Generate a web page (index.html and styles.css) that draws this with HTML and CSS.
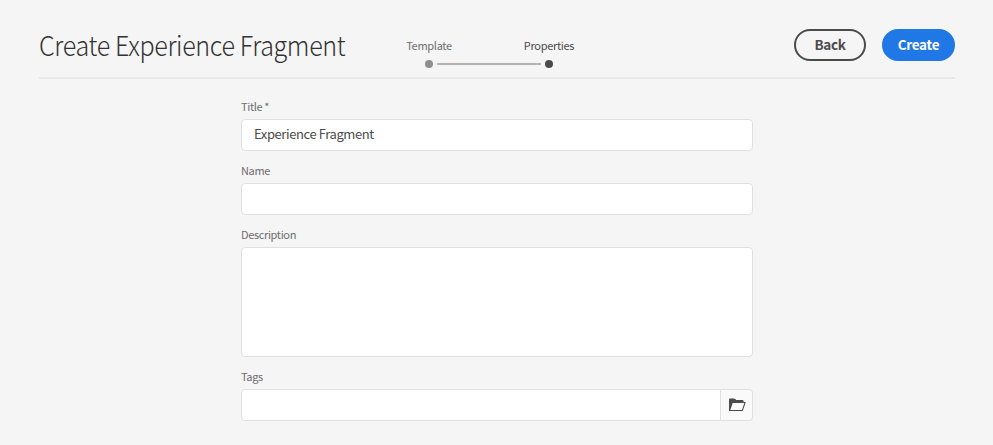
FILE: index.html
```html
<!DOCTYPE html>
<html lang="en">
<head>
<meta charset="utf-8">
<title>Create Experience Fragment</title>
<link rel="stylesheet" href="styles.css">
</head>
<body>
<header class="header">
  <h1 class="title">Create Experience Fragment</h1>
  <ol class="steps">
    <li class="step"><span class="step-label">Template</span><span class="dot"></span></li>
    <li class="step active"><span class="step-label">Properties</span><span class="dot"></span></li>
  </ol>
  <div class="actions">
    <button class="button secondary">Back</button>
    <button class="button primary">Create</button>
  </div>
</header>
<form class="form">
  <div class="field">
    <label class="label" for="title">Title *</label>
    <input class="input" id="title" type="text" value="Experience Fragment">
  </div>
  <div class="field">
    <label class="label" for="name">Name</label>
    <input class="input" id="name" type="text">
  </div>
  <div class="field">
    <label class="label" for="description">Description</label>
    <textarea class="input area" id="description"></textarea>
  </div>
  <div class="field">
    <label class="label" for="tags">Tags</label>
    <div class="group">
      <input class="input" id="tags" type="text">
      <button class="browse" type="button" aria-label="Browse">
        <svg width="18" height="14" viewBox="0 0 18 14">
          <path fill="#4b4b4b" fill-rule="evenodd" d="M1 13V1.500Q1 .5 2 .5H6Q6.700 .5 7.200 1L8.200 2H14.500Q15.500 2 15.500 3V4H17Q17.800 4 17.500 5L15 12.300Q14.800 13 14 13ZM4.700 5L2.300 12H14L16.300 5Z"/>
        </svg>
      </button>
    </div>
  </div>
</form>
</body>
</html>
```
FILE: styles.css
```css
* {
  box-sizing: border-box;
}

body {
  margin: 0;
  height: 445px;
  overflow: hidden;
  background: #f5f5f5;
  color: #4b4b4b;
  font-family: "Noto Sans CJK SC", "Noto Sans", sans-serif;
}

.header {
  display: flex;
  align-items: flex-start;
  width: 916px;
  height: 79px;
  margin-left: 39px;
  border-bottom: 2px solid #e8e8e8;
}

.title {
  width: 330px;
  margin: 27px 0 0;
  color: #323232;
  font-size: 27px;
  font-weight: 300;
  line-height: 36px;
  letter-spacing: -0.4px;
  white-space: nowrap;
  transform: scaleX(0.93);
  transform-origin: 0 0;
}

.steps {
  display: flex;
  margin: 37px 0 0;
  padding: 0;
  list-style: none;
}

.step {
  position: relative;
  display: flex;
  flex-direction: column;
  align-items: center;
  width: 120px;
  color: #6e6e6e;
  font-size: 11px;
  line-height: 16px;
  letter-spacing: -0.3px;
}

.step-label {
  white-space: nowrap;
}

.dot {
  width: 8px;
  height: 8px;
  margin-top: 7px;
  border-radius: 50%;
  background: #8e8e8e;
}

.step:first-child::after {
  content: "";
  position: absolute;
  top: 26px;
  left: 68px;
  width: 104px;
  height: 2px;
  background: #b3b3b3;
}

.active {
  color: #4b4b4b;
}

.active .dot {
  background: #4b4b4b;
}

.actions {
  display: flex;
  gap: 16px;
  margin: 29px 0 0 auto;
}

.button {
  height: 32px;
  padding: 0 0 1px;
  border: 2px solid #4b4b4b;
  border-radius: 16px;
  font: 700 13.5px/27px "Noto Sans CJK SC", "Noto Sans", sans-serif;
  letter-spacing: -0.3px;
}

.secondary {
  width: 72px;
  background: transparent;
  color: #4b4b4b;
}

.primary {
  width: 73px;
  border-color: #1f78e6;
  background: #1f78e6;
  color: #fff;
}

.form {
  display: flex;
  flex-direction: column;
  gap: 12px;
  width: 512px;
  margin: 20px 0 0 241px;
}

.field {
  display: flex;
  flex-direction: column;
}

.label {
  height: 20px;
  color: #6e6e6e;
  font-size: 11px;
  line-height: 14px;
  letter-spacing: -0.35px;
}

.input {
  display: block;
  width: 100%;
  height: 32px;
  padding: 0 12px 3px;
  border: 1px solid #e0e0e0;
  border-radius: 4px;
  outline: 0;
  background: #fff;
  color: #4b4b4b;
  font: 400 13px/20px "Noto Sans CJK SC", "Noto Sans", sans-serif;
  letter-spacing: -0.4px;
}

.area {
  height: 110px;
  resize: none;
}

.group {
  display: flex;
}

.group .input {
  width: 480px;
  border-radius: 4px 0 0 4px;
}

.browse {
  display: flex;
  align-items: center;
  justify-content: center;
  width: 32px;
  height: 32px;
  padding: 0;
  border: 1px solid #e0e0e0;
  border-left: 0;
  border-radius: 0 4px 4px 0;
  background: #fafafa;
}
```
